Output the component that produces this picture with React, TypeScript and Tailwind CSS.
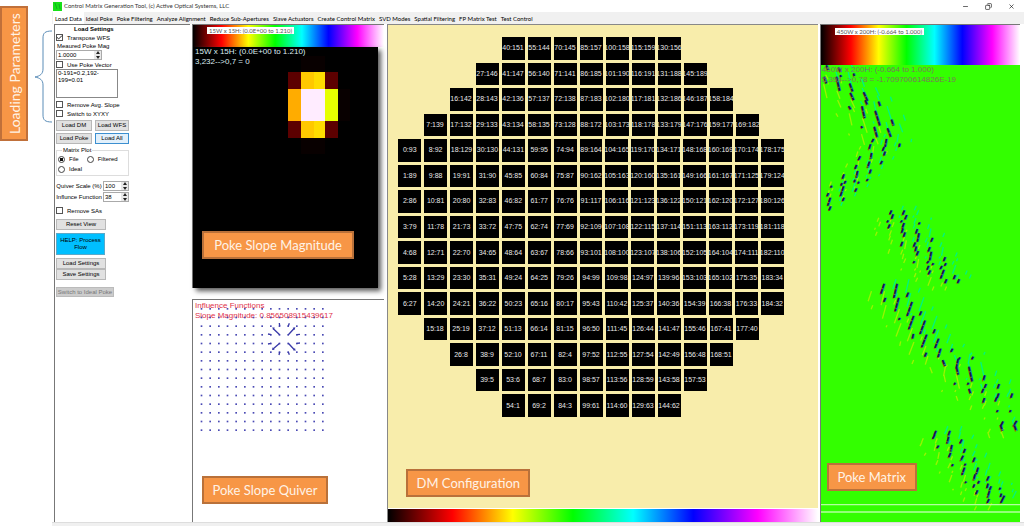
import React from "react";
import { Check, Copy, Minus, X } from "lucide-react";

const TABS = [
  "Load Data",
  "Ideal Poke",
  "Poke Filtering",
  "Analyze Alignment",
  "Reduce Sub-Apertures",
  "Slave Actuators",
  "Create Control Matrix",
  "SVD Modes",
  "Spatial Filtering",
  "FP Matrix Test",
  "Test Control",
];

// one line per row of actuators, "actuator:channel"
const DM_ROWS = [
  "40:151 55:144 70:145 85:157 100:158 115:159 130:156",
  "27:146 41:147 56:140 71:141 86:185 101:190 116:191 131:188 145:189",
  "16:142 28:143 42:136 57:137 72:138 87:183 102:180 117:181 132:186 146:187 158:184",
  "7:139 17:132 29:133 43:134 58:135 73:128 88:172 103:173 118:178 133:179 147:176 159:177 169:182",
  "0:93 8:92 18:129 30:130 44:131 59:95 74:94 89:164 104:165 119:170 134:171 148:168 160:169 170:174 178:175",
  "1:89 9:88 19:91 31:90 45:85 60:84 75:87 90:162 105:163 120:160 135:161 149:166 161:167 171:125 179:124",
  "2:86 10:81 20:80 32:83 46:82 61:77 76:76 91:117 106:116 121:123 136:122 150:121 162:120 172:127 180:126",
  "3:79 11:78 21:73 33:72 47:75 62:74 77:69 92:109 107:108 122:115 137:114 151:113 163:112 173:119 181:118",
  "4:68 12:71 22:70 34:65 48:64 63:67 78:66 93:101 108:100 123:107 138:106 152:105 164:104 174:111 182:110",
  "5:28 13:29 23:30 35:31 49:24 64:25 79:26 94:99 109:98 124:97 139:96 153:103 165:102 175:35 183:34",
  "6:27 14:20 24:21 36:22 50:23 65:16 80:17 95:43 110:42 125:37 140:36 154:39 166:38 176:33 184:32",
  "15:18 25:19 37:12 51:13 66:14 81:15 96:50 111:45 126:44 141:47 155:46 167:41 177:40",
  "26:8 38:9 52:10 67:11 82:4 97:52 112:55 127:54 142:49 156:48 168:51",
  "39:5 53:6 68:7 83:0 98:57 113:56 128:59 143:58 157:53",
  "54:1 69:2 84:3 99:61 114:60 129:63 144:62",
].map((row) => row.split(" "));

const RAINBOW =
  "bg-[linear-gradient(to_right,#000_0%,#f00_15%,#ff0_29%,#0f0_43%,#0ff_57%,#00f_71%,#f0f_86%,#fff_100%)]";

const BUTTON =
  "h-[11px] border border-[#b8b8b8] bg-[#e1e1e1] text-center leading-[9px] whitespace-nowrap";

const Callout: React.FC<{ className: string; children: string }> = ({
  className,
  children,
}) => (
  <div
    className={`absolute h-7 border-2 border-[#b9713a] bg-[#f79646] px-2 text-center font-[Lato,sans-serif] text-[13px] leading-6 whitespace-nowrap text-[#fff3e6] ${className}`}
  >
    {children}
  </div>
);

const Tick: React.FC<{ label: string; checked?: boolean }> = ({
  label,
  checked,
}) => (
  <label className="flex h-[9px] items-center gap-1">
    <span className="relative flex">
      <input
        type="checkbox"
        defaultChecked={checked}
        className="peer size-[7px] appearance-none border border-[#555] bg-white"
      />
      <Check
        strokeWidth={3}
        className="pointer-events-none absolute inset-0 hidden size-[7px] peer-checked:block"
      />
    </span>
    {label}
  </label>
);

const Radio: React.FC<{ label: string; checked?: boolean }> = ({
  label,
  checked,
}) => (
  <label className="flex h-[10px] items-center gap-1">
    <input
      type="radio"
      name="plot"
      defaultChecked={checked}
      className="size-[7px] appearance-none rounded-full border border-[#444] bg-white checked:bg-[radial-gradient(#111_45%,transparent_55%)]"
    />
    {label}
  </label>
);

const Spinner: React.FC<{ label: string; value: string; className: string }> = ({
  label,
  value,
  className,
}) => (
  <span className={`flex h-[10px] border border-[#aaa] bg-white ${className}`}>
    <input
      aria-label={label}
      defaultValue={value}
      className="w-0 min-w-0 flex-1 px-px outline-none"
    />
    <button
      type="button"
      aria-label={`Step ${label}`}
      className="flex w-[7px] items-center justify-center bg-[#e8e8e8]"
    >
      <svg viewBox="0 0 6 8" className="h-2 w-[6px]">
        <path d="M3 0 5 3H1zM3 8 1 5h4z" fill="#222" />
      </svg>
    </button>
  </span>
);

const Settings: React.FC = () => (
  <form className="flex w-[136px] shrink-0 flex-col items-start border-t border-l border-[#777] bg-white pl-px text-[6px] leading-[8px]">
    <h2 className="pl-[18px] font-bold">Load Settings</h2>
    <Tick label="Transpose WFS" checked />
    <div className="h-2 pl-px">Meaured Poke Mag</div>
    <Spinner label="Meaured Poke Mag" value="1.0000" className="w-[46px]" />
    <Tick label="Use Poke Vector" />
    <textarea
      aria-label="Poke Vector"
      defaultValue={"0-191=0.2,192-\n199=0.01"}
      className="mb-[2px] h-[29px] w-[62px] resize-none border border-[#888] px-px leading-[7px]"
    />
    <Tick label="Remove Avg. Slope" />
    <Tick label="Switch to XYXY" />
    <div className="mt-[2px] grid grid-cols-2 gap-x-[3px] gap-y-[2px]">
      <button type="button" className={`${BUTTON} w-[36px]`}>
        Load DM
      </button>
      <button type="button" className={`${BUTTON} w-[34px]`}>
        Load WFS
      </button>
      <button type="button" className={`${BUTTON} w-[36px]`}>
        Load Poke
      </button>
      <button
        type="button"
        className="h-[11px] w-[34px] border border-[#3c8fd0] bg-[#e2f0fb] leading-[9px]"
      >
        Load All
      </button>
    </div>
    <fieldset className="mt-[2px] w-[73px] border border-[#ddd] pb-px pl-px">
      <legend className="ml-1 px-px leading-[8px]">Matrix Plot</legend>
      <div className="flex gap-2">
        <Radio label="File" checked />
        <Radio label="Filtered" />
      </div>
      <Radio label="Ideal" />
    </fieldset>
    <div className="mt-[5px] grid grid-cols-[46px_26px] items-center gap-px text-center whitespace-nowrap">
      <span>Quiver Scale (%)</span>
      <Spinner label="Quiver Scale" value="100" className="w-[26px]" />
      <span>Influnce Function</span>
      <Spinner label="Influnce Function" value="38" className="w-[26px]" />
    </div>
    <div className="py-1">
      <Tick label="Remove SAs" />
    </div>
    <button type="button" className={`${BUTTON} w-[50px]`}>
      Reset View
    </button>
    <button
      type="button"
      className="my-[3px] h-[22px] w-[49px] border border-[#5aa9c9] bg-[#00bfff] px-px leading-[7px]"
    >
      HELP: Process Flow
    </button>
    <button type="button" className={`${BUTTON} w-[50px]`}>
      Load Settings
    </button>
    <button type="button" className={`${BUTTON} w-[50px]`}>
      Save Settings
    </button>
    <button
      type="button"
      disabled
      className="mt-[7px] h-[10px] w-[58px] border border-[#bbb] bg-[#ccc] leading-[8px] whitespace-nowrap text-[#777]"
    >
      Switch to Ideal Poke
    </button>
  </form>
);

const Magnitude: React.FC = () => (
  <section className="flex flex-[264] flex-col border-t border-l border-[#777]">
    <div className={`h-[22px] shrink-0 ${RAINBOW}`}>
      <span className="mt-[2px] ml-[14px] inline-block h-[7px] bg-white px-[2px] align-top font-[Lato,sans-serif] text-[6px] leading-[7px] text-[#555]">
        15W x 15H: (0.0E+00 to 1.210)
      </span>
    </div>
    <div className="relative mr-[6px] flex-1 bg-black shadow-[3px_3px_5px_#555]">
      <svg
        viewBox="0 0 186 241"
        preserveAspectRatio="none"
        className="absolute inset-0 size-full"
        shapeRendering="crispEdges"
      >
        <path d="M95 25h51v66H95z" fill="#5c0000" />
        <path d="M108 25h13v66h-13z" fill="#ffc800" />
        <path d="M121 25h12v66h-12z" fill="#ffdc00" />
        <path d="M95 42h13v32H95z" fill="#ffac00" />
        <path d="M133 42h13v32h-13z" fill="#e6ff00" />
        <path d="M108 42h25v32h-25z" fill="#ffecff" />
        <path d="M108 9h25v16h-25zM108 91h25v16h-25zM146 42h12v32h-12z" fill="#080000" />
      </svg>
      <p className="relative pl-[2px] text-[8px] leading-[10px] text-[#dcebf0]">
        15W x 15H: (0.0E+00 to 1.210)
        <br />
        3,232--&gt;0,7 = 0
      </p>
      <Callout className="bottom-[29px] left-[9px] w-[152px]">
        Poke Slope Magnitude
      </Callout>
    </div>
  </section>
);

const LINES = Array.from({ length: 15 }, (_, i) => i);

const Quiver: React.FC = () => (
  <section className="relative mt-[11px] flex-[223] border-t border-l border-[#777] bg-white">
    <p className="pt-px pl-[2px] text-[8px] leading-[10px] text-[#e03048]">
      Influence Functions
      <br />
      Slope Magnitude: 0.856508915439617
    </p>
    <svg viewBox="0 0 402 402" className="absolute top-0 left-0 size-[134px]">
      {LINES.map((r) =>
        LINES.map((c) => (
          <rect
            key={`${r}-${c}`}
            x={23 + c * 26}
            y={24 + r * 26}
            width="5"
            height="5"
            fill="#4a4ab4"
          />
        )),
      )}
      <path
        d="M260 104l-19-18M286 104l18-19M260 130l-20 17M286 130l18 19M260 78l-1-9M286 78l3-8M234 104l-9-2M312 104l9-1M234 130l-9 2M312 130l9-1M260 156l-2 9M286 156l3 8"
        fill="none"
        stroke="#3a3aa8"
        strokeWidth="4"
      />
      <path
        d="M238 82l8 1-6 7zM307 82l-8 1 6 7zM237 150l8-1-6-7zM308 152l-8-1 6-7z"
        fill="#3a3aa8"
      />
    </svg>
    <Callout className="bottom-[18px] left-[9px] w-[126px]">
      Poke Slope Quiver
    </Callout>
  </section>
);

const DmConfig: React.FC = () => (
  <section className="flex min-w-0 flex-[431] flex-col border-t border-l border-[#888]">
    <div className="relative flex-1 bg-[#f8edab] pt-3 pr-[34px] pl-[10px]">
      <div className="flex h-[380px] flex-col gap-[3px]">
        {DM_ROWS.map((row) => (
          <div key={row[0]} className="flex flex-1 justify-center gap-[3px]">
            {row.map((cell) => (
              <span
                key={cell}
                className="flex w-[23px] items-center justify-center overflow-hidden bg-black text-[7px] leading-[8px] whitespace-nowrap text-[#e8e8e8]"
              >
                {cell}
              </span>
            ))}
          </div>
        ))}
      </div>
      <Callout className="bottom-[11px] left-[18px] w-[124px]">
        DM Configuration
      </Callout>
    </div>
    <div className={`mt-px h-[13px] shrink-0 ${RAINBOW}`} />
  </section>
);

// response streaks, in thirds of a pixel
const UPPER =
  "M34 196l5 14M27 230l7 20M70 202l7 14M64 230l10 42M104 250l9 24M106 278l10 22M146 276l12 26M151 300l6 14M101 318l6 10M141 318l8 36M191 304l5 14M181 332l14 44M230 358l6 18M178 380l9 32M218 384l10 26M139 378l3 6M215 416l-4 24M255 430l-2 10M176 416l-5 10M167 432l-5 16M208 440l-5 12M170 458l-3 18M211 454l-4 12M136 468l-6 12M202 482l-5 10M164 484l-6 18M125 494l-5 12M168 508l-4 12M128 512l-4 20M87 522l-5 14M120 538l-2 8M159 536l-4 6M132 544l-3 6M92 542l-4 8M125 564l-5 10M50 556l-3 6M81 548l-3 8M86 558l-10 30M40 578l-4 10M87 592l-4 10M46 592l-8 24M47 618l-5 12M76 225l2 6M116 220l2 8";
const LOWER =
  "M230 30l-5 12M235 42l-5 14M220 60l-3 6M225 72l-5 12M269 30l-6 14M276 44l-6 14M262 60l-4 6M268 68l-6 16M265 84l-5 14M271 96l-5 14M263 124l-5 14M315 66l-3 6M308 86l-5 14M313 98l-5 26M302 126l-6 14M305 138l-4 16M311 152l-6 14M299 182l-3 6M354 112l-5 12M346 140l-6 14M350 154l-5 26M342 182l-5 6M356 188l-3 6M342 196l-5 12M347 210l-6 12M392 170l-5 12M382 196l-5 10M394 188l-4 8M388 208l-10 26M396 236l-5 12M422 224l-5 12M434 236l-5 12M208 250l-10 30M212 292l-5 12M247 250l-10 42M252 292l-11 40M281 276l-6 14M292 304l-15 42M255 352l-3 6M297 346l-15 40M320 332l-5 12M331 360l-15 40M296 400l-3 14M336 402l-15 38M335 456l-5 12M361 386l-5 12M372 414l-11 28M378 444l-8 26M414 444l-5 10M384 478l7 18M431 474l-6 30M426 500l5 22M422 546l-3 6M436 470l-3 6M476 468l-4 8M463 498l10 44M462 546l-3 6M463 564l5 14M511 524l-5 16M515 550l-5 12M507 564l-5 12M510 592l-5 14M554 550l-5 14M553 578l-5 14M547 590l-5 12M594 578l-5 14M550 628l-3 6M589 628l-3 6M566 662l-6 12M558 672l6 18M607 660l-10 16M600 674l6 16M364 690l-5 12M360 702l-6 12M372 734l-5 8M406 690l-6 16M402 708l-5 20M412 732l-4 20M408 756l-6 14M415 790l-3 6M442 716l-6 12M452 744l-5 12M446 764l-8 16M453 788l-3 6M450 800l-8 22M455 842l-3 4M481 770l-6 14M491 800l-6 20M482 820l-5 18M494 840l-4 8M480 850l-4 10M489 868l-5 12M523 826l-6 14M521 848l-4 14M530 856l-5 12M525 870l-6 20M524 894l-6 12M558 860l-3 6M561 878l-3 10M570 884l-5 10M565 894l-6 12";

const Streaks: React.FC<{ d: string }> = ({ d }) => (
  <>
    <path d={d} stroke="#98f400" strokeWidth="4" transform="translate(-38 22)" />
    <path d={d} stroke="#00f480" strokeWidth="4" transform="translate(36 -14)" />
    <path d={d} stroke="#a06000" strokeWidth="4" transform="translate(-2 2)" />
    <path d={d} stroke="#0080c0" strokeWidth="4" transform="translate(3 0)" />
    <path d={d} stroke="#181850" strokeWidth="5" strokeDasharray="14 3" />
  </>
);

const PokeMatrix: React.FC = () => (
  <section className="flex min-w-0 flex-[200] flex-col border-t border-l border-[#777]">
    <div className={`h-10 shrink-0 ${RAINBOW}`}>
      <span className="mt-[3px] ml-[14px] inline-block h-[7px] bg-white px-[2px] align-top font-[Lato,sans-serif] text-[6px] leading-[7px] text-[#555]">
        450W x 200H: (-0.664 to 1.000)
      </span>
    </div>
    <div className="relative flex-1 overflow-hidden bg-[#33ff00]">
      <svg
        viewBox="0 0 600 1368"
        preserveAspectRatio="none"
        className="absolute inset-0 size-full"
        fill="none"
      >
        <g transform="translate(-18 -195)">
          <Streaks d={UPPER} />
        </g>
        <g transform="translate(-18 405)">
          <Streaks d={LOWER} />
        </g>
        <path d="M0 1316h600M0 1338h600" stroke="#b4ffa0" strokeWidth="4" />
      </svg>
      <p className="relative pl-px text-[8px] leading-[10px] whitespace-nowrap text-[#7a7a5c]">
        450W x 200H: (-0.664 to 1.000)
        <br />
        5,394--&gt;0,78 = -1.709700614826E-19
      </p>
      <Callout className="bottom-[31px] left-[6px] w-[90px]">Poke Matrix</Callout>
    </div>
  </section>
);

const App: React.FC = () => {
  return (
    <div className="flex min-h-screen bg-white font-['Liberation_Sans',Arial,sans-serif] text-black">
      <aside className="flex w-[52px] shrink-0 items-start justify-between">
        <div className="mt-[6px] flex h-[135px] w-7 rotate-180 items-center justify-center border-2 border-[#c0703a] bg-[#f79646] font-[Lato,sans-serif] text-[14px] whitespace-nowrap text-[#fff3e6] [writing-mode:vertical-rl]">
          Loading Parameters
        </div>
        <svg
          viewBox="0 0 17 94"
          className="mt-[30px] h-[94px] w-[17px]"
          fill="none"
          stroke="#5b8db8"
        >
          <path d="M17 1C10 1 8 3 8 8v31c0 5-3 7-8 8 5 1 8 3 8 8v30c0 5 2 7 9 7" />
        </svg>
      </aside>

      <main className="flex min-w-0 flex-1 flex-col bg-[#f0f0f0]">
        <header className="flex h-3 items-center bg-white">
          <svg viewBox="0 0 9 9" className="ml-px size-[9px]">
            <path d="M0 0h9v9H0z" fill="#18e018" />
            <path d="m2 1 2 6M6 2l1 5" stroke="#10b020" />
          </svg>
          <h1 className="ml-[2px] flex-1 font-[Lato,sans-serif] text-[6px] leading-3 text-[#333]">
            Control Matrix Generation Tool, (c) Active Optical Systems, LLC
          </h1>
          <div className="flex gap-4 pr-[9px]">
            <button type="button" aria-label="Minimize">
              <Minus className="size-[7px]" />
            </button>
            <button type="button" aria-label="Restore">
              <Copy className="size-[7px] -scale-x-100" />
            </button>
            <button type="button" aria-label="Close">
              <X className="size-[7px]" />
            </button>
          </div>
        </header>
        <nav className="flex h-3 pl-px font-[Lato,sans-serif] text-[6px] leading-[11px]">
          {TABS.map((tab, i) => (
            <button
              key={tab}
              type="button"
              className={`px-[2px] whitespace-nowrap ${i === 0 ? "bg-white" : ""}`}
            >
              {tab}
            </button>
          ))}
        </nav>
        <div className="flex flex-1 gap-[2px] bg-white pr-1 pl-[2px]">
          <Settings />
          <div className="flex min-w-0 flex-[193] flex-col pr-px">
            <Magnitude />
            <Quiver />
          </div>
          <DmConfig />
          <PokeMatrix />
        </div>
        <footer className="h-1 border-t border-[#ddd]" />
      </main>
    </div>
  );
};

export default App;
